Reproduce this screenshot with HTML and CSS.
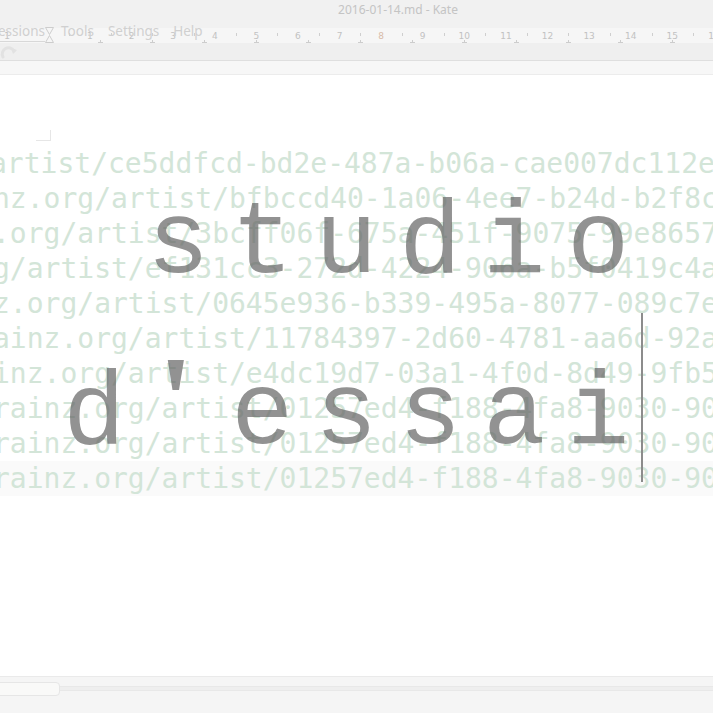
FILE: index.html
```html
<!DOCTYPE html>
<html>
<head>
<meta charset="utf-8">
<link rel="stylesheet" href="styles.css">
</head>
<body>
<div class="window">
  <div class="titlebar"><span class="title">2016-01-14.md - Kate</span></div>
  <div class="rulerband">
    <div class="ruler-b">
      <span class="mk"></span><span class="mk"></span><span class="mk"></span><span class="mk"></span><span class="mk"></span><span class="mk"></span><span class="mk"></span><span class="mk"></span><span class="mk"></span><span class="mk"></span><span class="mk"></span><span class="mk"></span>
    </div>
    <div class="ruler-a">
      <span class="first">1</span>
      <span class="cells">
        <span class="cell"><b>1</b></span><span class="cell"><b>2</b></span><span class="cell"><b>3</b></span><span class="cell"><b>4</b></span><span class="cell"><b>5</b></span><span class="cell"><b>6</b></span><span class="cell"><b>7</b></span><span class="cell"><b class="hl">8</b></span><span class="cell"><b>9</b></span><span class="cell"><b>10</b></span><span class="cell"><b>11</b></span><span class="cell"><b>12</b></span><span class="cell"><b>13</b></span><span class="cell"><b>14</b></span><span class="cell"><b>15</b></span><span class="cell"><b>16</b></span>
      </span>
    </div>
    <div class="menu">
      <span class="item sessions">essions</span>
      <span class="item">Tools</span>
      <span class="item">Settings</span>
      <span class="item">Help</span>
    </div>
    <div class="indent">
      <span class="indent-line"></span>
      <svg class="hourglass" width="9" height="16" viewBox="0 0 9 16"><path d="M0.5 0.5 H8.5 L4.5 7.5 Z M4.5 8.5 L8.5 15.5 H0.5 Z" fill="none" stroke="#cdcdcd" stroke-width="1"/></svg>
    </div>
  </div>
  <div class="toolbar">
    <svg class="redo" width="18" height="16" viewBox="0 0 18 16"><path d="M3 12 A6 6 0 0 1 14 6" fill="none" stroke="#e2e2e2" stroke-width="3" stroke-linecap="round"/><path d="M11 3 L17 5 L13 9 Z" fill="#e2e2e2"/></svg>
  </div>
  <div class="tabbar"></div>
  <div class="editor">
    <div class="corner"></div>
    <div class="lines">
      <div class="line first-line">artist/ce5ddfcd-bd2e-487a-b06a-cae007dc112e)</div>
      <div class="line">nz.org/artist/bfbccd40-1a06-4ee7-b24d-b2f8c6a9e1d0)</div>
      <div class="line">.org/artist/3bcff06f-675a-451f-9075-99e8657047e8)</div>
      <div class="line">g/artist/ef131cc3-272d-4224-906a-b5f0419c4a2d)</div>
      <div class="line">z.org/artist/0645e936-b339-495a-8077-089c7e56f3a1)</div>
      <div class="line">ainz.org/artist/11784397-2d60-4781-aa6d-92a4f21b8c3e)</div>
      <div class="line">inz.org/artist/e4dc19d7-03a1-4f0d-8d49-9fb58c0a2e17)</div>
      <div class="line">rainz.org/artist/01257ed4-f188-4fa8-9030-90b6c6a1d6f4)</div>
      <div class="line">rainz.org/artist/01257ed4-f188-4fa8-9030-90b6c6a1d6f4)</div>
      <div class="line current">rainz.org/artist/01257ed4-f188-4fa8-9030-90b6c6a1d6f4)</div>
    </div>
    <div class="bigtext">
      <div class="bigline"> studio</div>
      <div class="bigline">d<span class="apos">'</span>essai</div>
      <span class="cursor"></span>
    </div>
  </div>
  <div class="statusbar">
    <div class="handle"></div>
    <div class="groove"></div>
  </div>
</div>
</body>
</html>
```
FILE: styles.css
```css
html, body {
  margin: 0;
  padding: 0;
  background: #ffffff;
}
.window {
  width: 713px;
  height: 713px;
  overflow: hidden;
  display: flex;
  flex-direction: column;
}
.titlebar {
  height: 28px;
  flex: none;
  background: #f1f1f1;
  display: flex;
  justify-content: center;
  padding-left: 83px;
  box-sizing: border-box;
}
.title {
  font-family: "Noto Sans", sans-serif;
  font-size: 12px;
  line-height: 20px;
  color: #c4c4c4;
}
.rulerband {
  height: 15px;
  flex: none;
  background: #f6f6f6;
  display: grid;
  position: relative;
  z-index: 1;
}
.rulerband > * {
  grid-area: 1 / 1;
}
.ruler-a {
  display: flex;
  align-items: center;
  height: 15px;
  font-family: "DejaVu Sans", sans-serif;
  font-size: 9px;
  color: #c2c2c2;
}
.first {
  width: 14px;
  text-align: center;
  flex: none;
}
.cells {
  display: flex;
  margin-left: 55.2px;
}
.cell {
  width: 41.6px;
  flex: none;
  display: flex;
  align-items: center;
  height: 15px;
}
.cell::before {
  content: "";
  width: 1px;
  height: 3px;
  background: #cfcfcf;
  margin-top: -2px;
}
.cell b {
  flex: 1;
  font-weight: normal;
  text-align: center;
  margin-left: -1px;
}
.cell b.hl {
  color: #d8bba6;
}
.ruler-b {
  display: flex;
  align-items: flex-end;
  padding-left: 98px;
}
.mk {
  width: 52px;
  flex: none;
  height: 3px;
  display: flex;
}
.mk::before {
  content: "";
  width: 5px;
  height: 3px;
  box-sizing: border-box;
  border-bottom: 1px solid #cdcdcd;
  background: linear-gradient(to right, transparent 2px, #cdcdcd 2px, #cdcdcd 3px, transparent 3px);
}
.menu {
  display: flex;
  align-self: start;
  margin-top: -6px;
  margin-left: -2px;
  font-family: "Noto Sans", sans-serif;
  font-size: 13.5px;
  line-height: 18px;
  color: #d0d0d0;
  gap: 14px;
}
.menu .sessions {
  margin-right: 2px;
}
.indent {
  display: flex;
  align-items: flex-end;
  height: 15px;
}
.indent-line {
  width: 45px;
  height: 1px;
  background: #d8d8d8;
  margin-bottom: 1px;
}
.hourglass {
  display: block;
  margin-top: -1px;
}
.toolbar {
  height: 17px;
  flex: none;
  background: #efefef;
  display: flex;
  align-items: center;
}
.redo {
  display: block;
  margin-top: 2px;
}
.tabbar {
  height: 15px;
  flex: none;
  box-sizing: border-box;
  background: #f7f7f7;
  border-top: 1px solid #dfdfdf;
  border-bottom: 1px solid #ececec;
}
.editor {
  flex: none;
  height: 601px;
  background: #ffffff;
  position: relative;
  overflow: hidden;
}
.corner {
  width: 14px;
  height: 10px;
  margin-left: 36px;
  margin-top: 55px;
  margin-bottom: 5px;
  border-right: 1px solid #e6e6e6;
  border-bottom: 1px solid #e6e6e6;
}
.lines {
  margin-left: -7px;
  font-family: "DejaVu Sans Mono", monospace;
  font-size: 28px;
  line-height: 35px;
  color: #d3e5d8;
}
.line {
  white-space: pre;
  height: 35px;
}
.line.first-line {
  margin-left: -3px;
}
.line.current {
  background: #fafafa;
}
.bigtext {
  position: absolute;
  left: 63px;
  top: 84px;
  font-family: "Liberation Mono", monospace;
  font-size: 104px;
  letter-spacing: 21.6px;
  line-height: 171px;
  color: rgba(100, 100, 100, 0.7);
}
.bigline {
  white-space: pre;
  height: 171px;
}
.apos {
  letter-spacing: 0;
  font-family: "Liberation Serif", serif;
  font-weight: bold;
  font-size: 128px;
  line-height: 0;
  padding-left: 11px;
  padding-right: 37.4px;
}
.cursor {
  position: absolute;
  left: 578px;
  top: 154px;
  width: 2px;
  height: 169px;
  background: #8c8c8c;
}
.statusbar {
  flex: none;
  height: 37px;
  box-sizing: border-box;
  border-top: 1px solid #eaeaea;
  background: #f5f5f5;
  display: flex;
  align-items: flex-start;
  padding-top: 5px;
}
.handle {
  width: 66px;
  height: 14px;
  margin-left: -6px;
  box-sizing: border-box;
  border: 1px solid #e6e6e6;
  border-radius: 4px;
  background: #f9f9f8;
  flex: none;
}
.groove {
  flex: 1;
  height: 5px;
  margin-top: 4px;
  box-sizing: border-box;
  background: #eeeeee;
  border-top: 1px solid #e8e8e8;
  border-bottom: 1px solid #e8e8e8;
}
```
